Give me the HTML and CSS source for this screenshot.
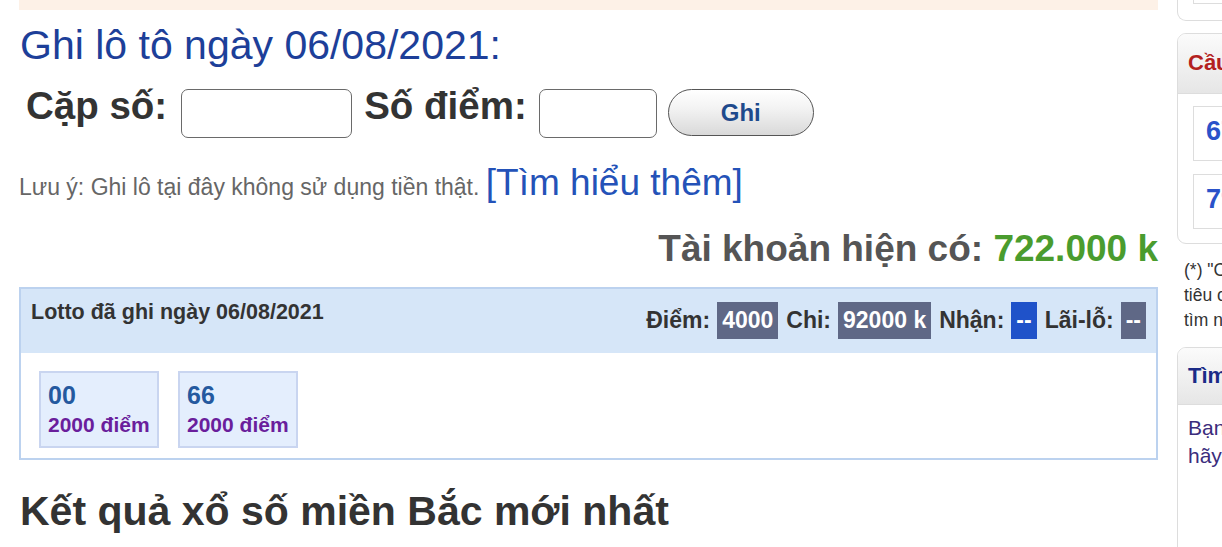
FILE: index.html
```html
<!DOCTYPE html>
<html lang="vi">
<head>
<meta charset="utf-8">
<title>Ghi lô tô</title>
<link rel="stylesheet" href="styles.css">
</head>
<body>
<div class="page">
  <main class="main">
    <div class="banner"></div>
    <h1 class="title">Ghi lô tô ngày 06/08/2021:</h1>
    <form class="form-row">
      <label class="lbl">Cặp số:</label>
      <input class="inp inp-pair" type="text">
      <label class="lbl lbl-2">Số điểm:</label>
      <input class="inp inp-points" type="text">
      <button class="btn" type="button">Ghi</button>
    </form>
    <p class="note">Lưu ý: Ghi lô tại đây không sử dụng tiền thật. <a class="more" href="#">[Tìm hiểu thêm]</a></p>
    <p class="balance">Tài khoản hiện có: <span class="amount">722.000 k</span></p>
    <section class="lotto">
      <div class="lotto-head">
        <div class="lotto-title">Lotto đã ghi ngày 06/08/2021</div>
        <div class="stats">
          <span>Điểm:</span><span class="badge">4000</span>
          <span>Chi:</span><span class="badge">92000 k</span>
          <span>Nhận:</span><span class="badge badge-blue">--</span>
          <span>Lãi-lỗ:</span><span class="badge">--</span>
        </div>
      </div>
      <div class="lotto-body">
        <div class="pick"><div class="num">00</div><div class="pts">2000 điểm</div></div>
        <div class="pick"><div class="num">66</div><div class="pts">2000 điểm</div></div>
      </div>
    </section>
    <h2 class="results">Kết quả xổ số miền Bắc mới nhất</h2>
  </main>
  <aside class="side">
    <div class="sbox sbox-top"><div class="top-item"></div></div>
    <div class="sbox sbox-cau">
      <div class="shead shead-red">Cầu lô đẹp nhất</div>
      <div class="sbody">
        <div class="sitem">67 - 76</div>
        <div class="sitem">79 - 97</div>
      </div>
    </div>
    <p class="snote">(*) "Cầu" là các cặp số đẹp theo<br>tiêu chí thống kê, bạn có thể<br>tìm nhiều cầu hơn tại đây.</p>
    <div class="sbox sbox-find">
      <div class="shead shead-navy">Tìm cầu lô tô</div>
      <div class="sbody sbody-text">Bạn muốn tìm cầu đẹp,<br>hãy thử công cụ soi cầu.</div>
    </div>
  </aside>
</div>
</body>
</html>
```

FILE: styles.css
```css
html, body {
  margin: 0;
  padding: 0;
  overflow: hidden;
  background: #fff;
}
body {
  font-family: "Liberation Sans", Arial, sans-serif;
  color: #333;
}
.page {
  display: flex;
  gap: 19px;
  padding-left: 19px;
  width: 1400px;
}
.main {
  width: 1139px;
  flex: none;
}
.banner {
  height: 10px;
  background: #fdf1e7;
}
.title {
  margin: 11px 0 0 1px;
  font-size: 41px;
  line-height: 48px;
  font-weight: normal;
  color: #1d3f99;
}
.form-row {
  display: flex;
  align-items: flex-start;
  margin: 20px 0 0 7px;
  height: 49px;
}
.lbl {
  font-size: 38.5px;
  line-height: 33px;
  font-weight: bold;
  color: #333;
  margin-right: 14px;
  white-space: nowrap;
}
.lbl-2 {
  margin-left: 12px;
  margin-right: 12px;
}
.inp {
  box-sizing: border-box;
  height: 49px;
  border: 1.5px solid #6a6a6a;
  border-radius: 7px;
  background: #fff;
  margin: 0;
}
.inp-pair { width: 171px; }
.inp-points { width: 118px; }
.btn {
  box-sizing: border-box;
  margin-left: 11px;
  width: 146px;
  height: 47px;
  border: 1.5px solid #555;
  border-radius: 24px;
  background: linear-gradient(#ffffff, #f3f3f3 40%, #d9d9d9);
  font-family: "Liberation Sans", Arial, sans-serif;
  font-weight: bold;
  font-size: 24px;
  color: #1e4a8c;
  padding: 0;
}
.note {
  margin: 25px 0 0 0;
  font-size: 23px;
  line-height: 40px;
  color: #666;
}
.more {
  font-size: 37px;
  color: #2452b8;
  text-decoration: none;
}
.balance {
  margin: 21px 0 0 0;
  text-align: right;
  font-size: 37px;
  line-height: 42px;
  font-weight: bold;
  color: #555;
}
.amount { color: #4a9c2e; }
.lotto {
  margin-top: 17px;
  border: 2px solid #bcd2ef;
}
.lotto-head {
  display: flex;
  justify-content: space-between;
  align-items: flex-start;
  height: 64px;
  box-sizing: border-box;
  padding: 10px 10px 0 10px;
  background: #d6e6f8;
}
.lotto-title {
  font-size: 21.5px;
  line-height: 26px;
  font-weight: bold;
  color: #333;
}
.stats {
  display: flex;
  align-items: center;
  gap: 7px;
  margin-top: 3px;
  font-size: 23px;
  font-weight: bold;
  color: #333;
}
.badge {
  display: inline-block;
  height: 37px;
  line-height: 37px;
  padding: 0 5px;
  background: #5f6886;
  color: #fff;
}
.badge-blue { background: #1f52c9; }
.stats .badge + span { margin-left: 1px; }
.lotto-body {
  display: flex;
  gap: 19px;
  padding: 18px 18px 10px 18px;
}
.pick {
  box-sizing: border-box;
  width: 120px;
  height: 77px;
  border: 2px solid #c9d5f0;
  background: #e4eefd;
  padding: 7px 0 0 7px;
}
.num {
  font-size: 25px;
  line-height: 30px;
  font-weight: bold;
  color: #24599f;
}
.pts {
  font-size: 21px;
  line-height: 30px;
  font-weight: bold;
  color: #6a1e9c;
}
.results {
  margin: 27px 0 0 1px;
  font-size: 41px;
  line-height: 48px;
  font-weight: bold;
  color: #333;
}
.side {
  width: 300px;
  flex: none;
}
.sbox {
  border: 1.5px solid #ddd;
  border-radius: 9px;
  overflow: hidden;
}
.sbox-top {
  margin-top: -20px;
  height: 41px;
  box-sizing: border-box;
  border-top: none;
}
.top-item {
  margin-left: 15px;
  height: 23px;
  border: 1.5px solid #ddd;
  border-top: none;
}
.sbox-cau {
  margin-top: 12px;
}
.shead {
  height: 60px;
  box-sizing: border-box;
  padding: 17px 0 0 10px;
  font-size: 22px;
  font-weight: bold;
  background: linear-gradient(#fbfbfb, #e6e6e6);
  border-bottom: 1px solid #ddd;
}
.shead-red { color: #b3211e; padding-top: 16px; }
.shead-navy { color: #1b2b87; height: 57px; padding-top: 15px; }
.sbody {
  padding: 12px 0 14px 15px;
}
.sitem {
  box-sizing: border-box;
  height: 55px;
  border: 1.5px solid #ddd;
  padding: 9px 0 0 12px;
  font-size: 27px;
  font-weight: bold;
  color: #2a52c9;
  margin-bottom: 13px;
}
.sitem:last-child { margin-bottom: 0; }
.snote {
  margin: 14px 0 0 7px;
  font-size: 17.5px;
  line-height: 25px;
  color: #333;
  white-space: nowrap;
}
.sbox-find {
  margin-top: 14px;
  height: 300px;
}
.sbody-text {
  padding: 9px 0 0 10px;
  font-size: 21px;
  line-height: 28px;
  color: #3b2c7c;
  white-space: nowrap;
}
```
